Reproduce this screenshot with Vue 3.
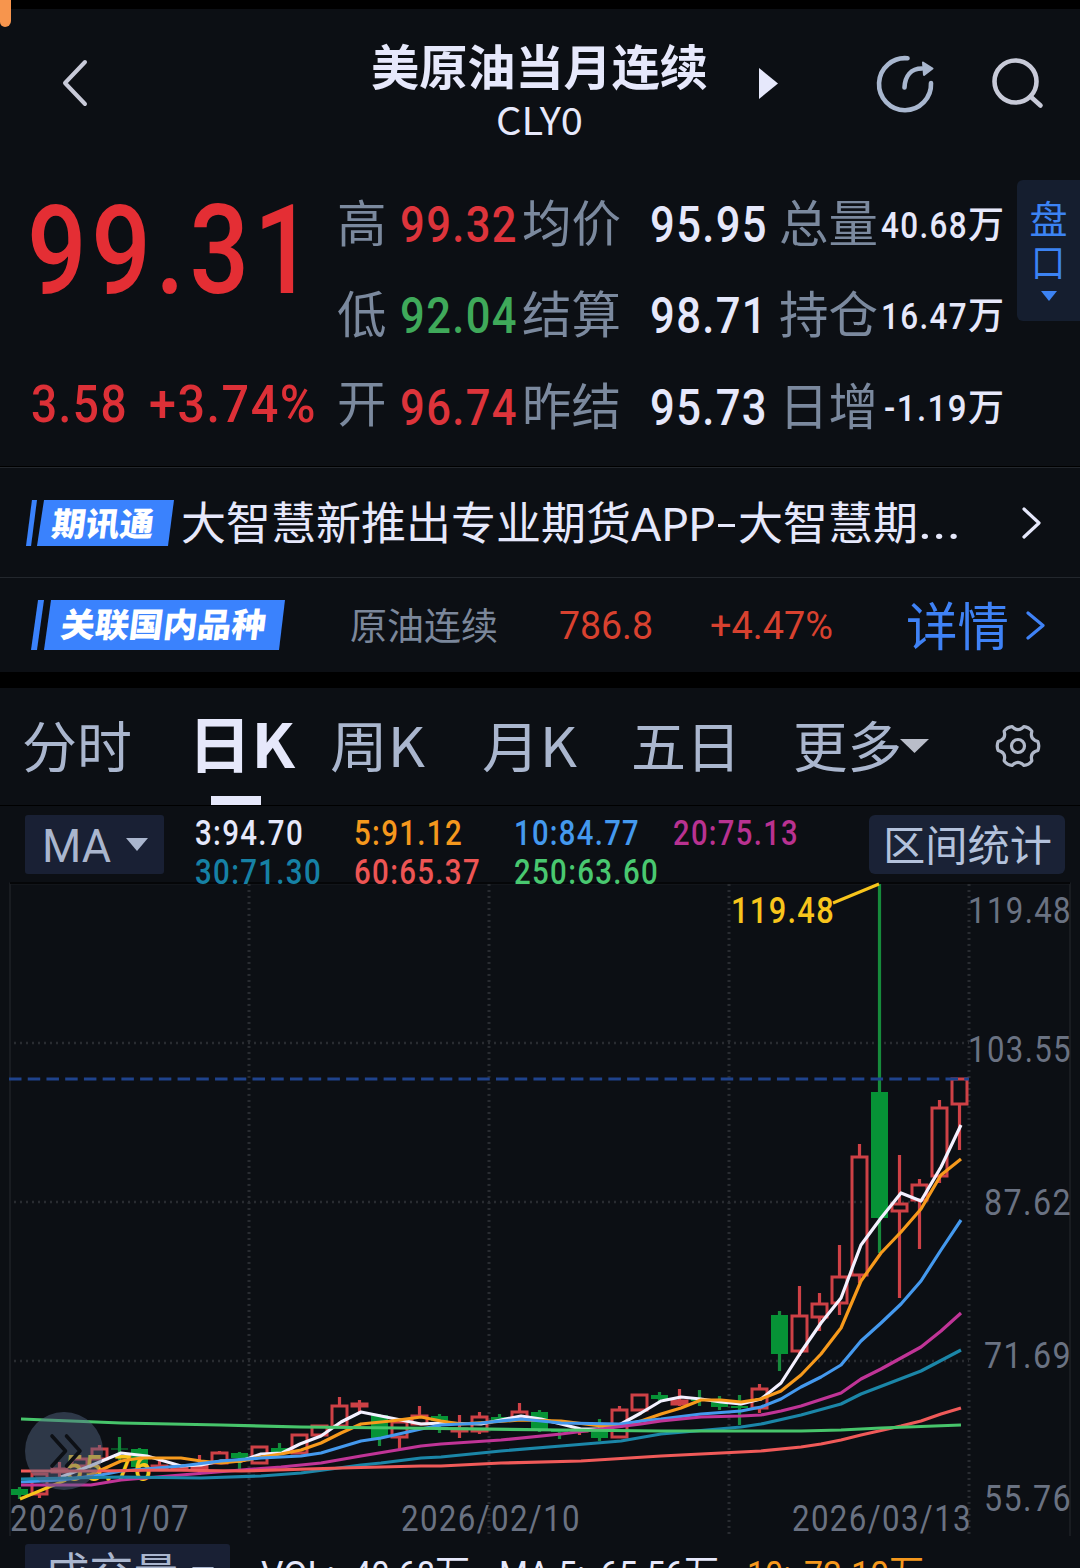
<script setup>
import { h } from 'vue'

// One line of text set to a known width; the bottom edge of the box is the baseline.
const Fit = (props) =>
  h(
    'svg',
    {
      width: props.w,
      height: Math.round(props.s * 0.75),
      style: { display: 'block', flex: 'none', overflow: 'visible' },
    },
    [
      h(
        'text',
        {
          x: 0,
          y: Math.round(props.s * 0.75),
          'font-size': props.s,
          fill: 'currentColor',
          textLength: props.w,
          lengthAdjust: 'spacingAndGlyphs',
        },
        props.t,
      ),
    ],
  )
Fit.props = ['t', 'w', 's']

const quotes = [
  [
    { label: '高', value: '99.32', tone: 'up' },
    { label: '均价', value: '95.95', tone: 'flat' },
    { label: '总量', value: '40.68', w: 87 },
  ],
  [
    { label: '低', value: '92.04', tone: 'down' },
    { label: '结算', value: '98.71', tone: 'flat' },
    { label: '持仓', value: '16.47', w: 87 },
  ],
  [
    { label: '开', value: '96.74', tone: 'up' },
    { label: '昨结', value: '95.73', tone: 'flat' },
    { label: '日增', value: '-1.19', w: 84 },
  ],
]

const averages = [
  { t: '3:94.70', w: 109, c: '#e6e8fb' },
  { t: '5:91.12', w: 109, c: '#f5981d' },
  { t: '10:84.77', w: 126, c: '#4499ee' },
  { t: '20:75.13', w: 126, c: '#b93291' },
  { t: '30:71.30', w: 127, c: '#1681a5' },
  { t: '60:65.37', w: 127, c: '#ee5554' },
  { t: '250:63.60', w: 145, c: '#49c870' },
]

// kind (r = hollow rise, g = fall), high, top, bottom, low
const candles = [
  ['g', 1487, 1489, 1495, 1499], ['r', 1473, 1474, 1494, 1498], ['r', 1462, 1469, 1472, 1480],
  ['r', 1456, 1459, 1466, 1468], ['r', 1445, 1449, 1459, 1460], ['g', 1437, 1448.5, 1449.5, 1460],
  ['g', 1448, 1449, 1467, 1468], ['r', 1461, 1466, 1468, 1469], ['r', 1465, 1467, 1469, 1471],
  ['r', 1455, 1466, 1469, 1475], ['r', 1451, 1453, 1463, 1464], ['g', 1452, 1453, 1458, 1469],
  ['r', 1446, 1447, 1463, 1464], ['g', 1443, 1448, 1453, 1453], ['r', 1434, 1435, 1453, 1454],
  ['r', 1425, 1426, 1435, 1436], ['r', 1397, 1406, 1426, 1427], ['r', 1400, 1404, 1406, 1412],
  ['g', 1414, 1415, 1438, 1446], ['r', 1421, 1422, 1437, 1449], ['r', 1406, 1416, 1424, 1425],
  ['g', 1414, 1416, 1421, 1433], ['r', 1415, 1429, 1431, 1438], ['r', 1412, 1417, 1431, 1434],
  ['g', 1414, 1417, 1420, 1423], ['r', 1403, 1412, 1418, 1419], ['g', 1410, 1412, 1431, 1432],
  ['g', 1429, 1430, 1432, 1439], ['r', 1428, 1430, 1431, 1435], ['g', 1419, 1431, 1438, 1441],
  ['r', 1406, 1410, 1437, 1438], ['r', 1394, 1395, 1410, 1411], ['g', 1392, 1395, 1399, 1402],
  ['r', 1389, 1401, 1404, 1406], ['g', 1390, 1399, 1401, 1406], ['g', 1396, 1402, 1407, 1410],
  ['g', 1395, 1406, 1408, 1425], ['r', 1384, 1389, 1408, 1413], ['g', 1311, 1315, 1354, 1371],
  ['r', 1286, 1316, 1351, 1356], ['r', 1293, 1304, 1317, 1331], ['r', 1245, 1277, 1303, 1315],
  ['r', 1144, 1157, 1275, 1283], ['g', 884, 1092, 1218, 1253], ['r', 1155, 1204, 1211, 1298],
  ['r', 1179, 1185, 1200, 1249], ['r', 1100, 1108, 1176, 1183], ['r', 1079, 1079, 1104, 1150],
].map(([kind, high, top, bottom, low], i) => ({ kind, high, top, bottom, low, x: 19.5 + i * 20 }))

const lines = [
  { c: '#f3f0ff', p: '61,1477 90,1466 121,1453 147,1456 181,1466 201,1465 221,1461 241,1461 261,1454 282,1453 300,1444 321,1436 341,1422 361,1412 391,1418 421,1424 441,1423 481,1424 501,1420 521,1416 541,1419 561,1424 581,1429 601,1429 621,1424 641,1413 661,1401 681,1397 701,1399 721,1402 741,1404 761,1399 781,1383 801,1352 821,1323 841,1298 861,1245 881,1218 901,1193 921,1201 941,1167 961,1125' },
  { c: '#f79a1c', p: '90,1475 121,1461 141,1458 181,1458 201,1461 221,1463 241,1461 261,1457 281,1454 301,1450 321,1443 341,1433 361,1424 391,1421 421,1417 441,1421 461,1424 521,1420 561,1421 601,1426 621,1426 641,1421 661,1414 681,1408 701,1400 721,1400 741,1402 761,1399 781,1391 801,1375 821,1354 841,1328 861,1281 881,1253 901,1232 921,1209 941,1175 961,1159' },
  { c: '#4499ee', p: '21,1482 61,1480 101,1475 121,1471 181,1466 221,1461 261,1458 301,1456 321,1453 341,1447 361,1441 381,1438 421,1429 441,1425 481,1423 521,1419 541,1421 561,1423 621,1424 641,1421 661,1419 701,1414 741,1411 761,1407 781,1399 801,1387 821,1377 841,1365 861,1341 881,1323 901,1304 921,1281 941,1250 961,1220' },
  { c: '#c03497', p: '21,1485 91,1485 121,1480 181,1475 241,1470 281,1467 321,1463 361,1456 421,1446 441,1444 501,1440 561,1434 601,1429 641,1424 661,1421 701,1417 741,1416 761,1415 781,1411 801,1406 841,1393 861,1379 881,1369 901,1358 921,1347 941,1331 961,1313' },
  { c: '#1b86a8', p: '21,1479 121,1477 201,1478 261,1476 301,1473 361,1465 381,1463 421,1458 441,1457 501,1451 561,1446 621,1441 661,1434 741,1427 761,1424 801,1415 841,1404 861,1394 921,1371 961,1350' },
  { c: '#f05a59', p: '21,1471 101,1471 161,1470 241,1471 341,1468 421,1466 441,1466 501,1463 581,1461 661,1456 741,1452 761,1451 801,1447 821,1444 841,1440 861,1435 901,1426 921,1421 941,1414 961,1408' },
  { c: '#47c56b', p: '21,1419 121,1423 221,1425 301,1427 401,1428 561,1430 661,1431 801,1431 841,1430 881,1428 961,1425' },
]

const axis = [
  { t: '119.48', x: 968, y: 923, w: 104 },
  { t: '103.55', x: 968, y: 1062, w: 104 },
  { t: '87.62', x: 984, y: 1215, w: 88 },
  { t: '71.69', x: 984, y: 1368, w: 88 },
  { t: '55.76', x: 984, y: 1511, w: 88 },
]
const dates = [
  { t: '2026/01/07', x: 10 },
  { t: '2026/02/10', x: 401 },
  { t: '2026/03/13', x: 792 },
]

// six-lobed gear outline
const at = (deg, r) => {
  const a = (deg * Math.PI) / 180
  return `${(24 + r * Math.cos(a)).toFixed(2)} ${(24 + r * Math.sin(a)).toFixed(2)}`
}
const gear =
  [0, 60, 120, 180, 240, 300]
    .map(
      (a, i) =>
        `${i ? 'L' : 'M'}${at(a - 13, 20.3)} Q${at(a, 21.8)} ${at(a + 13, 20.3)} L${at(a + 18, 18)} Q${at(a + 30, 15)} ${at(a + 42, 18)}`,
    )
    .join(' ') + ' Z'
</script>

<template>
  <main class="app">
    <div class="status"><i class="marker"></i></div>

    <header class="header">
      <svg class="back" width="28" height="48" viewBox="0 0 28 48"><path d="M24 3 4 24l20 21" /></svg>
      <div class="title">
        <Fit class="name" t="美原油当月连续" :w="337" :s="48" />
        <Fit class="code" t="CLY0" :w="87" :s="38.5" />
      </div>
      <svg class="play" width="20" height="32"><path d="M0 0 19 15.500 0 31Z" /></svg>
      <svg class="share" width="60" height="60" viewBox="0 0 60 60">
        <path d="M32.500 4.300A26 26 0 1 0 56 29" />
        <path d="M29.500 33.500C30 22 36 14.500 47 14.500" />
        <path class="head" d="M48 8.500 57.500 14.500 49 21Z" />
      </svg>
      <svg class="search" width="56" height="56" viewBox="0 0 56 56">
        <circle cx="25.500" cy="25.500" r="21" /><path d="m40.500 40.500 10 9" />
      </svg>
    </header>

    <section class="quote">
      <div class="price">
        <Fit class="last num" t="99.31" :w="291" :s="124" />
        <div class="change num">
          <Fit t="3.58" :w="97" :s="51.500" />
          <Fit t="+3.74%" :w="168" :s="51.500" />
        </div>
      </div>
      <div class="grid">
        <div v-for="(row, r) in quotes" :key="r" class="row">
          <template v-for="(q, i) in row" :key="q.label">
            <Fit class="label" :class="{ raised: q.label === '开' }" :t="q.label" :w="q.label.length * 49.500" :s="49.500" />
            <Fit v-if="i < 2" class="value num" :class="q.tone" :t="q.value" :w="118" :s="50.500" />
            <span v-else class="amount">
              <Fit class="num" :t="q.value" :w="q.w" :s="37" /><Fit t="万" :w="36" :s="37" />
            </span>
          </template>
        </div>
      </div>
      <aside class="depth">
        <span>盘</span><span class="narrow">口</span>
        <svg width="16" height="11"><path d="M0 0H16L8 10Z" /></svg>
      </aside>
    </section>

    <section class="news">
      <div class="badge"><i class="slash"></i><span class="plate"><Fit t="期讯通" :w="102" :s="33" /></span></div>
      <p class="headline">
        <Fit t="大智慧新推出专业期货" :w="450" :s="45" /><Fit class="latin" t="APP" :w="84" :s="46" /><i class="dash"></i
        ><Fit t="大智慧期" :w="180" :s="45" /><Fit class="dots" t="..." :w="43" :s="48" />
      </p>
      <svg class="go" width="22" height="34"><path d="m3 3 15 14-15 14" /></svg>
    </section>

    <section class="related">
      <div class="badge wide"><i class="slash"></i><span class="plate"><Fit t="关联国内品种" :w="205" :s="33.500" /></span></div>
      <Fit class="product" t="原油连续" :w="148" :s="37" />
      <Fit class="rprice" t="786.8" :w="94" :s="38.500" />
      <Fit class="rchange" t="+4.47%" :w="123" :s="38.500" />
      <Fit class="detail" t="详情" :w="103" :s="52" />
      <svg class="go blue" width="22" height="30"><path d="m3 3 15 12.500L3 28" /></svg>
    </section>

    <nav class="tabs">
      <Fit class="t1" t="分时" :w="110" :s="54.500" />
      <div class="active"><Fit t="日K" :w="107" :s="61" /><i></i></div>
      <Fit class="t3" t="周K" :w="95" :s="55" />
      <Fit class="t4" t="月K" :w="95" :s="55" />
      <Fit class="t5" t="五日" :w="110" :s="54.500" />
      <Fit class="t6" t="更多" :w="109" :s="54.500" />
      <svg class="caret" width="29" height="15"><path d="M0 0H29L14.500 14Z" /></svg>
      <svg class="gear" width="48" height="48" viewBox="0 0 48 48">
        <path :d="gear" /><circle cx="24" cy="24" r="6.500" />
      </svg>
    </nav>

    <section class="tools">
      <div class="select">
        <Fit t="MA" :w="69" :s="46" />
        <svg width="22" height="13"><path d="M0 0H22L11 13Z" /></svg>
      </div>
      <div class="averages num">
        <Fit v-for="a in averages" :key="a.t" :t="a.t" :w="a.w" :s="35.500" :style="{ color: a.c }" />
      </div>
      <div class="stats"><Fit t="区间统计" :w="169" :s="42.500" /></div>
    </section>

    <section class="chart">
      <svg width="1080" height="657" viewBox="0 883 1080 657">
        <path class="frame" d="M10 1536V883.500H1070V1536" />
        <path class="frame top" d="M10 883H1070" />
        <path class="dotv" d="M249 884V1535M489 884V1535M729 884V1535M969 884V1535" />
        <path class="doth" d="M14 1043H969M14 1202H969M14 1361H969" />
        <g v-for="c in candles" :key="c.x" :class="c.kind">
          <path v-if="c.kind === 'g'" :d="`M${c.x} ${c.high}V${c.low}`" />
          <path v-else :d="`M${c.x} ${c.high}V${c.top}M${c.x} ${c.bottom}V${c.low}`" />
          <rect v-if="c.kind === 'g'" :x="c.x - 8.500" :y="c.top" width="17" :height="c.bottom - c.top" />
          <rect v-else :x="c.x - 7.500" :y="c.top" width="15" :height="c.bottom - c.top" />
        </g>
        <path class="last-line" d="M9 1079H969" />
        <g class="mark num">
          <path d="M833 903 879 884M20 1499 66 1480" />
          <text x="731" y="923" textLength="104" lengthAdjust="spacingAndGlyphs">119.48</text>
          <text x="65" y="1481" textLength="88" lengthAdjust="spacingAndGlyphs">55.76</text>
        </g>
        <polyline v-for="l in lines" :key="l.c" class="ma" :points="l.p" :stroke="l.c" />
        <g class="axis num">
          <text v-for="a in axis" :key="a.t" :x="a.x" :y="a.y" :textLength="a.w" lengthAdjust="spacingAndGlyphs">{{ a.t }}</text>
          <text v-for="d in dates" :key="d.t" :x="d.x" y="1531" textLength="180" lengthAdjust="spacingAndGlyphs">{{ d.t }}</text>
        </g>
      </svg>
      <button class="expand">
        <svg width="78" height="78"><path d="m27 24 13.500 15L27 54M41.500 24 55 39 41.500 54" /></svg>
      </button>
    </section>

    <section class="volume">
      <div class="vselect">
        <Fit t="成交量" :w="133" :s="44.500" />
        <svg width="22" height="13"><path d="M0 0H22L11 13Z" /></svg>
      </div>
      <Fit class="v1" t="VOL:" :w="74" :s="37" />
      <Fit class="v2" t="40.68" :w="82" :s="37" /><Fit t="万" :w="35" :s="37" />
      <Fit class="v3" t="MA 5:" :w="86" :s="37" />
      <Fit class="v4" t="65.56" :w="84" :s="37" /><Fit t="万" :w="35" :s="37" />
      <Fit class="v5 orange" t="10:" :w="44" :s="37" />
      <Fit class="v6 orange" t="73.10" :w="85" :s="37" /><Fit class="orange" t="万" :w="35" :s="37" />
    </section>
  </main>
</template>

<style>
html,
body {
  margin: 0;
  background: #0c0f14;
}
</style>

<style scoped>
.app {
  width: 1080px;
  height: 1568px;
  overflow: hidden;
  display: flex;
  flex-direction: column;
  background: #0c0f14;
  color: #e6e8fb;
  font-family: Roboto, 'Noto Sans CJK SC', sans-serif;
}
.app > * {
  box-sizing: border-box;
  flex: none;
}
.num {
  letter-spacing: 1.6px;
}
.status {
  position: relative;
  height: 9px;
  background: #000;
}
.marker {
  position: absolute;
  left: 0;
  top: 0;
  width: 11px;
  height: 27px;
  border-radius: 0 0 6px 5px;
  background: #f7954d;
}

.header {
  height: 171px;
  display: flex;
  align-items: flex-start;
}
.header svg {
  flex: none;
}
.back {
  margin: 50px 0 0 61px;
  fill: none;
  stroke: #c8cad8;
  stroke-width: 4;
  stroke-linecap: round;
  stroke-linejoin: round;
}
.title {
  width: 337px;
  margin: 40px 0 0 282px;
  display: flex;
  flex-direction: column;
  align-items: center;
}
.name {
  font-weight: 700;
}
.code {
  margin-top: 21px;
  font-family: 'Noto Sans CJK SC', sans-serif;
}
.play {
  margin: 59px 0 0 51px;
  fill: #e6e8fb;
}
.share {
  margin: 45px 0 0 96px;
  fill: none;
  stroke: #a9b7cf;
  stroke-width: 4.6;
  stroke-linecap: round;
}
.share .head {
  fill: #a9b7cf;
  stroke-width: 2;
  stroke-linejoin: round;
}
.search {
  margin: 47px 0 0 55px;
  fill: none;
  stroke: #c8cad8;
  stroke-width: 4.6;
  stroke-linecap: round;
}

.quote {
  height: 286px;
  display: flex;
  align-items: flex-start;
}
.price {
  width: 337px;
  flex: none;
  color: #e42e34;
  font-weight: 500;
}
.last {
  margin: 20px 0 0 27px;
  letter-spacing: 5.5px;
}
.change {
  display: flex;
  margin: 90px 0 0 31px;
  gap: 21px;
  color: #dd3037;
}
.grid {
  width: 680px;
  flex: none;
  display: flex;
  flex-direction: column;
}
.row {
  height: 91px;
  display: flex;
  align-items: flex-end;
}
.row:first-child {
  height: 62px;
}
.row:last-child {
  height: 92px;
}
.label {
  color: #7b899e;
}
.label.raised {
  margin-bottom: 3px;
}
.value {
  font-weight: 500;
}
.row > :nth-child(2) {
  margin-left: 13px;
}
.row > :nth-child(3) {
  margin-left: 4px;
}
.row > :nth-child(4) {
  margin-left: 29px;
}
.row > :nth-child(5) {
  margin-left: 11px;
}
.up {
  color: #dd343b;
}
.down {
  color: #3fa95a;
}
.amount {
  margin: 0 13px 4px auto;
  display: flex;
  font-weight: 500;
}
.depth {
  width: 63px;
  height: 141px;
  box-sizing: border-box;
  padding-top: 18px;
  display: flex;
  flex-direction: column;
  align-items: center;
  border-radius: 6px 0 0 6px;
  background: #151e2f;
  color: #3c83f3;
  font-size: 38px;
  line-height: 44px;
}
.depth span {
  height: 43px;
}
.depth .narrow {
  transform: scaleX(0.9);
}
.depth svg {
  margin-top: 7px;
  fill: #3c83f3;
}

.news {
  height: 111px;
  border-top: 1px solid #000;
  box-shadow: inset 0 1px #23272d;
  display: flex;
  align-items: flex-start;
}
.badge {
  display: flex;
  flex: none;
  width: 148px;
  height: 46px;
  margin: 33px 0 0 26px;
  color: #fff;
  font-weight: 900;
}
.slash {
  width: 11px;
  background: #3a82fd;
  clip-path: polygon(54% 0, 100% 0, 46% 100%, 0 100%);
}
.plate {
  flex: 1;
  display: flex;
  padding: 11px 0 0 15px;
  background: #3a82fd;
  clip-path: polygon(7px 0, 100% 0, calc(100% - 6px) 100%, 0 100%);
}
.plate > svg {
  transform: skewX(-7deg);
}
.headline {
  display: flex;
  align-items: flex-end;
  margin: 39px 0 0 7px;
  width: 790px;
  height: 34px;
}
.headline .latin {
  font-family: Lato, 'Noto Sans CJK SC', sans-serif;
  margin-bottom: -1px;
}
.headline .dash {
  width: 17px;
  height: 3px;
  margin: 0 3px 13px;
  background: #e6e8fb;
}
.headline .dots {
  margin-bottom: 1px;
}
.go {
  margin: 39px 0 0 50px;
  fill: none;
  stroke: #e6e8fb;
  stroke-width: 3.2;
  stroke-linecap: round;
  stroke-linejoin: round;
}

.related {
  height: 111px;
  border-top: 1px solid #23272d;
  border-bottom: 16px solid #000;
  display: flex;
  align-items: flex-start;
}
.badge.wide {
  width: 254px;
  height: 50px;
  margin: 22px 0 0 31px;
}
.badge.wide .slash {
  width: 13px;
}
.wide .plate {
  padding: 12px 0 0 17px;
}
.product {
  margin: 34px 0 0 65px;
  color: #7b879b;
}
.rprice {
  margin: 32px 0 0 61px;
  color: #d8412f;
}
.rchange {
  margin: 32px 0 0 57px;
  color: #d8412f;
}
.detail {
  margin: 29px 0 0 73px;
  color: #3f82f6;
}
.go.blue {
  margin: 32px 0 0 16px;
  stroke: #3f82f6;
}

.tabs {
  height: 118px;
  border-bottom: 1px solid #000;
  padding: 0 0 38px 22px;
  display: flex;
  align-items: flex-end;
  color: #aab6ce;
}
.active {
  position: relative;
  margin: 0 0 -1px 56px;
  color: #e6e8fb;
  font-weight: 700;
}
.active i {
  position: absolute;
  left: 23px;
  bottom: -37px;
  width: 50px;
  height: 9px;
  background: #e6e8fb;
}
.tabs .t3 {
  margin-left: 35px;
}
.tabs .t4 {
  margin-left: 57px;
}
.tabs .t5 {
  margin-left: 54px;
}
.tabs .t6 {
  margin-left: 52px;
}
.tabs .active,
.tabs .t3,
.tabs .t4 {
  font-family: 'Noto Sans CJK SC', sans-serif;
}
.caret {
  margin: 0 0 13px -2px;
  fill: #b9bdc9;
}
.gear {
  margin: 0 0 -3px 65px;
  fill: none;
  stroke: #b0b8c9;
  stroke-width: 3.2;
  stroke-linejoin: round;
}

.tools {
  position: relative;
  z-index: 1;
  height: 77px;
  padding: 9px 15px 0 25px;
  display: flex;
  align-items: flex-start;
}
.select {
  width: 139px;
  height: 59px;
  flex: none;
  box-sizing: border-box;
  display: flex;
  align-items: center;
  gap: 15px;
  padding-left: 17px;
  border-radius: 3px;
  background: #192034;
  color: #aab6ce;
}
.select > svg:last-child,
.vselect > svg:last-child {
  fill: #aab6ce;
}
.averages {
  width: 640px;
  margin: 3px 0 0 31px;
  display: grid;
  grid-template-columns: 159px 160px 159px 160px;
  row-gap: 12px;
  font-weight: 500;
}
.stats {
  width: 196px;
  height: 59px;
  margin-left: auto;
  box-sizing: border-box;
  display: flex;
  align-items: center;
  justify-content: center;
  border-radius: 6px;
  background: #1a2236;
  color: #b4c2dc;
}

.chart {
  position: relative;
  height: 661px;
}
.chart > svg {
  display: block;
  overflow: visible;
}
.chart path {
  fill: none;
}
.frame {
  stroke: #191c21;
  stroke-width: 2;
}
.frame.top {
  stroke: #050608;
}
.dotv,
.doth {
  stroke: #292c31;
  stroke-width: 3;
  stroke-dasharray: 2 4;
}
.doth {
  stroke-width: 2.4;
}
.g {
  fill: #069336;
  stroke: #168a3b;
}
.g rect {
  stroke: none;
}
.g path,
.r path {
  stroke-width: 3.2;
}
.r {
  fill: none;
  stroke: #ce4146;
}
.r rect {
  stroke-width: 3;
}
.last-line {
  stroke: #1f438c;
  stroke-width: 3;
  stroke-dasharray: 12.500 6.230;
}
.ma {
  fill: none;
  stroke-width: 3.2;
  stroke-linejoin: round;
}
.mark {
  fill: #f8c51c;
  font-size: 36.5px;
  font-weight: 500;
}
.mark path {
  stroke: #f8c51c;
  stroke-width: 3;
}
.axis {
  fill: #6a7282;
  font-size: 36.5px;
}
.expand {
  position: absolute;
  left: 25px;
  top: 529px;
  width: 78px;
  height: 78px;
  padding: 0;
  border: 0;
  border-radius: 50%;
  background: rgba(88, 104, 136, 0.46);
}
.expand svg {
  display: block;
  fill: none;
  stroke: #0d1015;
  stroke-width: 3.6;
  stroke-linecap: round;
  stroke-linejoin: round;
}

.volume {
  height: 24px;
  overflow: hidden;
  display: flex;
  align-items: flex-start;
}
.vselect {
  width: 205px;
  height: 59px;
  flex: none;
  box-sizing: border-box;
  margin-left: 25px;
  padding: 13px 0 0 20px;
  display: flex;
  gap: 14px;
  border-radius: 3px;
  background: #192034;
  color: #aab6ce;
}
.vselect > svg:last-child {
  margin-top: 10px;
}
.volume > svg {
  margin-top: 15px;
}
.volume .v1 {
  margin-left: 31px;
}
.volume .v2 {
  margin-left: 18px;
}
.volume .v3 {
  margin-left: 29px;
}
.volume .v4 {
  margin-left: 15px;
}
.volume .v5 {
  margin-left: 28px;
}
.volume .v6 {
  margin-left: 13px;
}
.orange {
  color: #f5981d;
}
</style>
